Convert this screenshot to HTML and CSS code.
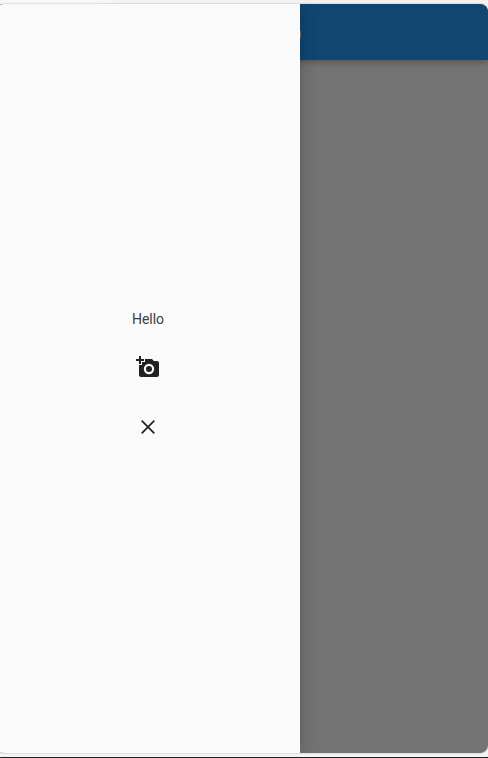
FILE: index.html
```html
<!DOCTYPE html>
<html lang="en">
<head>
<meta charset="utf-8">
<title>Drawer</title>
<link rel="stylesheet" href="styles.css">
</head>
<body>
<div class="backdrop-top"></div>
<div class="window">
  <main class="page">
    <header class="app-bar"></header>
    <div class="title-edge"></div>
  </main>
  <aside class="drawer">
    <div class="label">Hello</div>
    <button class="icon-button" aria-label="Add photo">
      <svg viewBox="0 0 24 24"><path d="M3 4V1h2v3h3v2H5v3H3V6H0V4h3zm3 6V7h3V4h7l1.83 2H21c1.1 0 2 .9 2 2v12c0 1.1-.9 2-2 2H5c-1.1 0-2-.9-2-2V10h3zm7 9.2a5.2 5.2 0 1 0 0-10.4 5.2 5.2 0 0 0 0 10.4zm-3-5.2a3 3 0 1 0 6 0 3 3 0 1 0-6 0z"/></svg>
    </button>
    <button class="icon-button close" aria-label="Close">
      <svg viewBox="0 0 24 24"><path d="M5.7 5.7l12.6 12.6M18.3 5.7L5.7 18.3"/></svg>
    </button>
  </aside>
</div>
<div class="backdrop-bottom"></div>
</body>
</html>
```
FILE: styles.css
```css
* { box-sizing: border-box; }
body {
  margin: 0;
  width: 488px;
  height: 758px;
  overflow: hidden;
  display: flex;
  flex-direction: column;
  background: #f4f4f4;
  font-family: Roboto, "Liberation Sans", sans-serif;
}
.backdrop-top {
  height: 4px;
  flex: none;
  background: linear-gradient(90deg, #f8f8f8 95px, #f2f2f2 120px);
}
.window {
  position: relative;
  z-index: 1;
  height: 749px;
  flex: none;
  margin-left: -4px;
  border-radius: 8px;
  overflow: hidden;
  background: #737373;
  box-shadow: 0 0 1px 1px rgba(0, 0, 0, .1);
}
.app-bar {
  height: 56px;
  background: #10466f;
  box-shadow: 0 2px 4px -1px rgba(0,0,0,.14), 0 4px 5px rgba(0,0,0,.08), 0 1px 8px rgba(0,0,0,.08);
}
.title-edge {
  position: absolute;
  left: 304px;
  top: 27px;
  width: 1px;
  height: 7px;
  background: #6e7478;
}
.drawer {
  position: absolute;
  left: 0;
  top: 0;
  bottom: 0;
  width: 304px;
  padding: 306px 0 0;
  display: flex;
  flex-direction: column;
  align-items: center;
  background: #fafafa;
  box-shadow: 0 0 16px rgba(0, 0, 0, .24);
}
.label {
  height: 18px;
  line-height: 18px;
  font-size: 14px;
  color: #404040;
  letter-spacing: 0;
}
.icon-button {
  width: 48px;
  height: 48px;
  margin-top: 15px;
  padding: 12px;
  border: 0;
  background: none;
}
.icon-button.close { margin-top: 12px; }
.icon-button svg { display: block; width: 24px; height: 24px; fill: #212121; }
.icon-button.close svg { fill: none; stroke: #212121; stroke-width: 1.7; }
.backdrop-bottom {
  margin-top: 4px;
  height: 1px;
  flex: none;
  background: #202022;
}
```
